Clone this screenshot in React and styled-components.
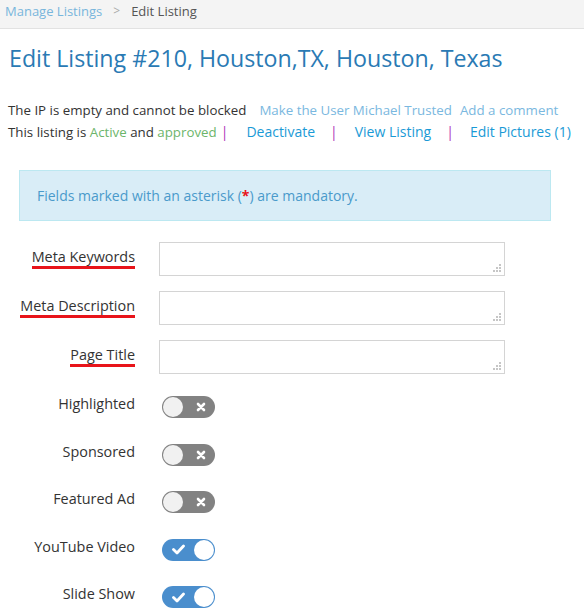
import React from "react";
import styled, { createGlobalStyle } from "styled-components";

const Global = createGlobalStyle`
  html, body { margin: 0; padding: 0; background: #fff; }
  body { font-family: "Open Sans", "Liberation Sans", sans-serif; color: #333; }
`;

const Page = styled.div`
  width: 584px;
`;

const Crumbs = styled.div`
  height: 29px;
  box-sizing: border-box;
  background: #f4f4f4;
  border-bottom: 1px solid #e2e2e2;
  display: flex;
  align-items: flex-start;
  padding: 2px 0 0 5px;
  font-size: 13px;
  line-height: 18px;
  gap: 11px;
`;

const CrumbLink = styled.a`
  color: #78b6dc;
  text-decoration: none;
`;

const CrumbSep = styled.span`
  color: #aaa;
  font-size: 12px;
`;

const CrumbCurrent = styled.span`
  color: #555;
`;

const Title = styled.h1`
  margin: 14px 0 0 9px;
  font-size: 23.2px;
  font-weight: 400;
  line-height: 30px;
  color: #2a7ab4;
`;

const Info = styled.div`
  margin: 26px 0 0 8px;
  font-size: 13.3px;
  line-height: 22px;
`;

const Line = styled.div`
  display: flex;
  align-items: baseline;
  white-space: nowrap;
`;

const SoftLink = styled.a`
  color: #7ab8e0;
  font-size: 13.3px;
  text-decoration: none;
  margin-left: ${p => p.$ml || 0}px;
`;

const Green = styled.span`
  color: #6cb56a;
`;

const Pipe = styled.span`
  color: #b036b8;
  margin: 0 ${p => p.$r || 0}px 0 ${p => p.$l || 0}px;
  font-size: 14px;
`;

const ActionLink = styled.a`
  color: #1a9ad6;
  font-size: 14px;
  text-decoration: none;
`;

const Alert = styled.div`
  margin: 27px 0 0 19px;
  width: 532px;
  height: 51px;
  box-sizing: border-box;
  background: #d9edf7;
  border: 1px solid #bce8f1;
  display: flex;
  align-items: center;
  padding-left: 17px;
  font-size: 14px;
  color: #4a9acb;
`;

const Star = styled.span`
  color: #e8141a;
  font-weight: 700;
`;

const Form = styled.div`
  margin-top: 21px;
  display: grid;
  grid-template-columns: 135px 1fr;
  column-gap: 24px;
`;

const FieldLabel = styled.label`
  justify-self: end;
  font-size: 14.4px;
  color: #333;
  padding-top: ${p => p.$top || 0}px;
  line-height: 20px;
  height: fit-content;
  ${p => p.$underline && `
    border-bottom: 3px solid #e8141a;
    line-height: 19px;
  `}
`;

const Field = styled.div`
  padding-top: ${p => p.$pt || 0}px;
  margin-bottom: ${p => p.$mb || 0}px;
`;

const Area = styled.textarea`
  display: block;
  width: 346px;
  height: 34px;
  box-sizing: border-box;
  border: 1px solid #d4d4d4;
  resize: none;
  outline: none;
  margin: 0;
  font-family: inherit;
`;

const AreaWrap = styled.div`
  position: relative;
  width: 346px;
`;

const Grip = styled.svg`
  position: absolute;
  right: 3px;
  bottom: 3px;
`;

const Toggle = styled.div`
  margin-left: 3px;
  width: 53px;
  height: 22px;
  border-radius: 11px;
  box-sizing: border-box;
  background: ${p => (p.$on ? "#4a8ecd" : "#828282")};
  display: flex;
  align-items: center;
  justify-content: space-between;
  flex-direction: ${p => (p.$on ? "row-reverse" : "row")};
  padding: ${p => (p.$on ? "0 1px 0 10px" : "0 9px 0 1px")};
`;

const Knob = styled.div`
  width: 20px;
  height: 20px;
  border-radius: 50%;
  background: ${p => (p.$on ? "#fff" : "#f1f1f1")};
  box-sizing: border-box;
`;

function ResizeGrip() {
  return (
    <Grip width="9" height="9" viewBox="0 0 9 9">
      {[
        [6, 0], [3, 3], [6, 3], [0, 6], [3, 6], [6, 6],
      ].map(([x, y], i) => (
        <rect key={i} x={x} y={y} width="2" height="2" fill="#c6c6c6" />
      ))}
    </Grip>
  );
}

function Switch({ on }) {
  return (
    <Toggle $on={on}>
      <Knob $on={on} />
      {on ? (
        <svg width="13" height="11" viewBox="0 0 13 11">
          <path d="M1.5 5.5 L5 9 L11.5 2" stroke="#fff" strokeWidth="2.8" fill="none" strokeLinecap="round" strokeLinejoin="round" />
        </svg>
      ) : (
        <svg width="10" height="10" viewBox="0 0 10 10">
          <path d="M2 2 L8 8 M8 2 L2 8" stroke="#fff" strokeWidth="2.6" strokeLinecap="round" />
        </svg>
      )}
    </Toggle>
  );
}

const textFields = ["Meta Keywords", "Meta Description", "Page Title"];
const switches = [
  ["Highlighted", false],
  ["Sponsored", false],
  ["Featured Ad", false],
  ["YouTube Video", true],
  ["Slide Show", true],
];

export default function App() {
  return (
    <Page>
      <Global />
      <Crumbs>
        <CrumbLink href="#">Manage Listings</CrumbLink>
        <CrumbSep>&gt;</CrumbSep>
        <CrumbCurrent>Edit Listing</CrumbCurrent>
      </Crumbs>
      <Title>Edit Listing #210, Houston,TX, Houston, Texas</Title>
      <Info>
        <Line>
          The IP is empty and cannot be blocked
          <SoftLink href="#" $ml={13}>Make the User Michael Trusted</SoftLink>
          <SoftLink href="#" $ml={8}>Add a comment</SoftLink>
        </Line>
        <Line>
          This listing is&nbsp;<Green>Active</Green>&nbsp;and&nbsp;<Green>approved</Green>
          <Pipe $l={4} $r={18}>|</Pipe>
          <ActionLink href="#">Deactivate</ActionLink>
          <Pipe $l={15} $r={17}>|</Pipe>
          <ActionLink href="#">View Listing</ActionLink>
          <Pipe $l={15} $r={16}>|</Pipe>
          <ActionLink href="#">Edit Pictures (1)</ActionLink>
        </Line>
      </Info>
      <Alert>
        Fields marked with an asterisk (<Star>*</Star>) are mandatory.
      </Alert>
      <Form>
        {textFields.map((f, i) => (
          <React.Fragment key={f}>
            <FieldLabel $underline $top={5}>{f}</FieldLabel>
            <Field $mb={i === textFields.length - 1 ? 20 : 15}>
              <AreaWrap>
                <Area />
                <ResizeGrip />
              </AreaWrap>
            </Field>
          </React.Fragment>
        ))}
        {switches.map(([label, on]) => (
          <React.Fragment key={label}>
            <FieldLabel $top={0}>{label}</FieldLabel>
            <Field $pt={2} $mb={23.5}>
              <Switch on={on} />
            </Field>
          </React.Fragment>
        ))}
      </Form>
    </Page>
  );
}
